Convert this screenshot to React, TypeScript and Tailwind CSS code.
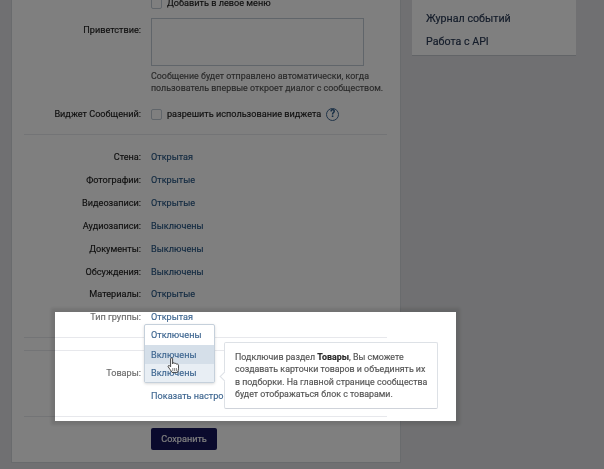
import React from "react";

const font = { fontFamily: "Roboto, 'Liberation Sans', sans-serif" };

const settings = [
  { label: "Стена:", value: "Открытая" },
  { label: "Фотографии:", value: "Открытые" },
  { label: "Видеозаписи:", value: "Открытые" },
  { label: "Аудиозаписи:", value: "Выключены" },
  { label: "Документы:", value: "Выключены" },
  { label: "Обсуждения:", value: "Выключены" },
  { label: "Материалы:", value: "Открытые" },
];

function Checkbox() {
  return <span className="block w-[11px] h-[11px] shrink-0 rounded-[2px] border border-[#c0cad5] bg-white" />;
}

function Row({ label, children, className = "" }: { label: string; children: React.ReactNode; className?: string }) {
  return (
    <div className={`flex items-center ${className}`}>
      <div className="w-[129px] text-right shrink-0 whitespace-nowrap">{label}</div>
      <div className="ml-[10px] flex items-center min-w-0">{children}</div>
    </div>
  );
}

function Divider({ className = "" }: { className?: string }) {
  return <div className={`ml-[12px] w-[363px] h-px bg-[#e7e8ec] ${className}`} />;
}

export default function App() {
  return (
    <div
      className="relative w-[604px] h-[469px] overflow-hidden bg-[#e0e1e4] flex items-start pl-[11px] text-[9.15px] leading-[12px] blur-[0.35px] [-webkit-text-stroke:0.15px]"
      style={font}
    >
      {/* settings form */}
      <div className="w-[390px] h-[463px] shrink-0 bg-white border-x border-b border-[#d3d6db] text-[#222]">
        <div className="flex items-center ml-[139px] mt-[-3px] h-[12px]">
          <Checkbox />
          <span className="ml-[5px]">Добавить в левое меню</span>
        </div>
        <div className="flex mt-[9px]">
          <div className="w-[129px] text-right pt-[6px]">Приветствие:</div>
          <div className="ml-[10px]">
            <div className="w-[213px] h-[48px] bg-white border border-[#c0cad5]" />
            <p className="mt-[4px] w-[240px] text-[#555] text-[8.9px] whitespace-nowrap">
              Сообщение будет отправлено автоматически, когда
              <br />
              пользователь впервые откроет диалог с сообществом.
            </p>
          </div>
        </div>
        <Row label="Виджет Сообщений:" className="mt-[10px] h-[20px]">
          <Checkbox />
          <span className="ml-[5px] whitespace-nowrap">разрешить использование виджета</span>
          <span className="ml-[5px] w-[13px] h-[13px] rounded-full border border-[#3f6791] text-[#2a5885] flex items-center justify-center text-[10px] font-bold leading-none">
            ?
          </span>
        </Row>
        <Divider className="mt-[10px]" />
        <div className="mt-[11px] flex flex-col">
          {settings.map((s) => (
            <Row key={s.label} label={s.label} className="h-[22.85px]">
              <span className="text-[#2a5885]">{s.value}</span>
            </Row>
          ))}
        </div>
        <Divider className="mt-[31px]" />
        <Divider className="mt-[12px]" />
        <Divider className="mt-[65px]" />
        <button className="block ml-[139px] mt-[11px] w-[66px] h-[22px] rounded-[2px] bg-[#14145a] text-white text-[9.15px]">
          Сохранить
        </button>
      </div>

      {/* right menu */}
      <div className="ml-[11px] w-[164px] h-[56px] shrink-0 bg-white border-b border-[#c5c8cf] text-[#2a3a55] text-[10.7px] pl-[14px] pt-[13px] flex flex-col gap-[10.5px]">
        <span>Журнал событий</span>
        <span>Работа с API</span>
      </div>

      {/* highlighted part of the form, everything around it is dimmed */}
      <div className="absolute left-[55px] top-[312px] w-[401px] h-[109px] bg-white shadow-[0_0_0_9999px_rgba(0,0,0,0.5),0_0_3px_4px_rgba(0,0,0,0.1)] text-[#6c6c6c]">
        <div className="flex items-center h-[8px] pt-[1px]">
          <div className="w-[86px] text-right whitespace-nowrap">Тип группы:</div>
          <span className="ml-[10px] text-[#3f6791]">Открытая</span>
        </div>
        <div className="mt-[17px] w-[332px] h-px bg-[#e7e8ec]" />
        <div className="mt-[12px] w-[332px] h-px bg-[#e7e8ec]" />
        <div className="flex items-center mt-[16px] h-[12px]">
          <div className="w-[86px] text-right">Товары:</div>
        </div>
        <div className="ml-[96px] mt-[11px] text-[#3f6791] whitespace-nowrap">Показать настройки</div>
        <div className="mt-[14px] w-[332px] h-px bg-[#e7e8ec]" />

        {/* dropdown */}
        <div className="absolute left-[89px] top-[12px] w-[71px] bg-white border border-[#c5d0db] rounded-[2px] shadow-[0_1px_3px_rgba(0,0,0,0.15)] text-[#3f6791]">
          <div className="h-[20px] pl-[6px] flex items-center">Отключены</div>
          <div className="h-[19px] pl-[6px] flex items-center bg-[#d5dfe9]">Включены</div>
          <div className="h-[18px] pl-[6px] flex items-center bg-[#e8eef4]">Включены</div>
        </div>

        {/* cursor */}
        <svg className="absolute left-[112px] top-[45px]" width="14" height="17" viewBox="0 0 14 17">
          <path
            d="M3.6 1.8c0-1.2 2-1.2 2 0v5l.4-.9c1 -.3 1.7 0 1.8.7.8-.4 1.6-.2 1.8.6.9-.4 1.8 0 1.9 1v3.6c0 1.6-.6 2.5-1 3.6H5c-.6-1.3-3-4.2-3.8-5.6-.5-1 .7-1.8 1.5-1l.9 1z"
            fill="#fff"
            stroke="#333"
            strokeWidth="0.9"
            strokeLinejoin="round"
          />
          <path d="M5.8 11v3M7.6 11v3M9.4 11v3" stroke="#333" strokeWidth="0.6" />
        </svg>

        {/* tooltip */}
        <div className="absolute left-[169px] top-[30px] w-[214px] h-[67px] bg-white border border-[#dde1e6] border-b-[#cfd3da] rounded-[2px] pl-[10px] pt-[8px] text-[#555] text-[8.85px] leading-[12.3px] whitespace-nowrap">
          Подключив раздел <b className="font-bold text-[#2b2b2b]">Товары</b>, Вы сможете
          <br />
          создавать карточки товаров и объединять их
          <br />
          в подборки. На главной странице сообщества
          <br />
          будет отображаться блок с товарами.
          <span className="absolute left-[-4px] top-[30px] w-[7px] h-[7px] rotate-45 bg-white border-l border-b border-[#dde1e6]" />
        </div>
      </div>
    </div>
  );
}
